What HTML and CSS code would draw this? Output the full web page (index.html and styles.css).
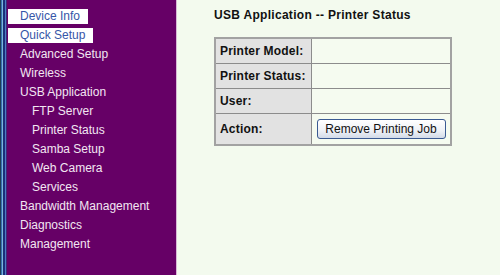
FILE: index.html
```html
<!DOCTYPE html>
<html lang="en">
<head>
  <meta charset="UTF-8">
  <title>USB Application -- Printer Status</title>
  <link rel="stylesheet" href="styles.css">
</head>
<body>
  <div class="frame"></div>

  <!-- Menu kiri -->
  <div class="menu">
    <div class="item hl">Device Info</div>
    <div class="item hl">Quick Setup</div>
    <div class="item">Advanced Setup</div>
    <div class="item">Wireless</div>
    <div class="item">USB Application</div>
    <div class="item sub">FTP Server</div>
    <div class="item sub">Printer Status</div>
    <div class="item sub">Samba Setup</div>
    <div class="item sub">Web Camera</div>
    <div class="item sub">Services</div>
    <div class="item">Bandwidth Management</div>
    <div class="item">Diagnostics</div>
    <div class="item">Management</div>
  </div>

  <div class="content">
    <h3>USB Application -- Printer Status</h3>
    <table class="status">
      <tr>
        <td class="label">Printer Model:</td>
        <td class="val"></td>
      </tr>
      <tr>
        <td class="label">Printer Status:</td>
        <td class="val"></td>
      </tr>
      <tr>
        <td class="label">User:</td>
        <td class="val"></td>
      </tr>
      <tr class="action">
        <td class="label">Action:</td>
        <td class="val"><button class="btn">Remove Printing Job</button></td>
      </tr>
    </table>
  </div>
</body>
</html>
```

FILE: styles.css
```css
* {
  box-sizing: border-box;
  margin: 0;
  padding: 0;
}

body {
  display: flex;
  height: 275px;
  overflow: hidden;
  font-family: 'Liberation Sans', Arial, sans-serif;
  font-size: 12px;
  background: #f3faee;
  color: #111;
}

.frame {
  width: 7px;
  flex-shrink: 0;
  background: linear-gradient(to right, #1d3f52 0, #1d3f52 1px, #3b6db3 1px, #3b6db3 2px, #7ab8d8 2px, #7ab8d8 3px, #1c2f7a 3px, #1c2f7a 5px, #4d7cc4 5px, #4d7cc4 6px, #3a2c7a 6px);
}

.menu {
  width: 170px;
  flex-shrink: 0;
  display: flex;
  flex-direction: column;
  align-items: flex-start;
  background: #660066;
  border-right: 1px solid #d9b8d6;
  padding-top: 7px;
}

.item {
  color: #f2e6f2;
  height: 19px;
  line-height: 19px;
  padding-left: 13px;
  white-space: nowrap;
}

.item.sub {
  padding-left: 25px;
}

.item.hl {
  height: 15px;
  line-height: 15px;
  margin: 2px 0 2px 1px;
  padding: 0 8px 0 12px;
  background: #ffffff;
  color: #3656a8;
}

.content {
  padding: 8px 0 0 37px;
}

.content h3 {
  font-size: 12px;
  font-weight: bold;
  letter-spacing: 0.3px;
  margin-bottom: 15px;
}

.status {
  border-collapse: collapse;
  border: 2px solid #a2a2a2;
  width: 238px;
}

.status td {
  border: 1px solid #8c8c8c;
  height: 25px;
  padding: 0 4px;
}

.status .label {
  width: 96px;
  background: #e2e2e2;
  font-weight: bold;
  letter-spacing: 0.2px;
}

.status .val {
  background: #f5fbf0;
}

.status .action td {
  height: 32px;
}

.btn {
  font-family: 'Liberation Sans', Arial, sans-serif;
  font-size: 12px;
  color: #111;
  width: 129px;
  height: 20px;
  margin-left: 1px;
  border: 1px solid #3a5a92;
  border-radius: 3px;
  background: linear-gradient(to bottom, #ffffff, #eef1f6 60%, #d3dbe8);
}
```
